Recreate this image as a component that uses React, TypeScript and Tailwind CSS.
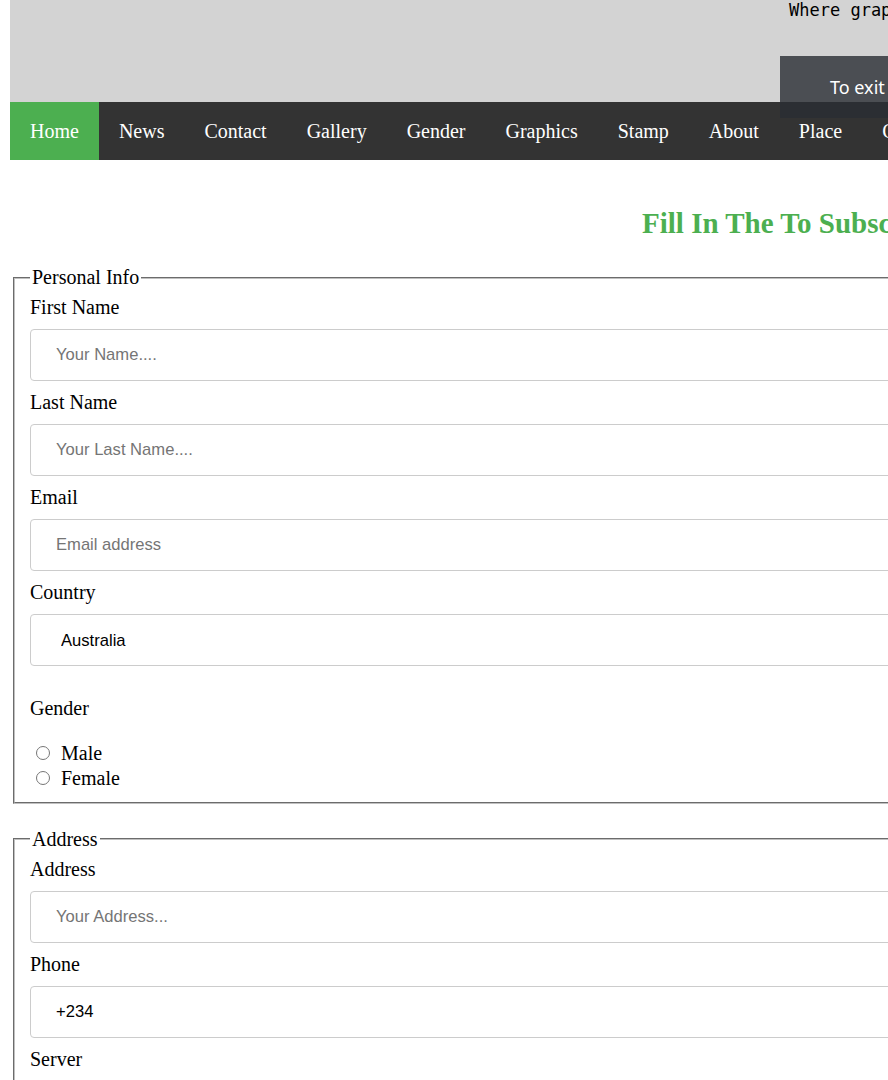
const navItems = ["Home", "News", "Contact", "Gallery", "Gender", "Graphics", "Stamp", "About", "Place", "Company"];

const inputCls =
  "block w-full h-[52px] my-[10px] border border-[#ccc] rounded-[4px] pl-[25px] text-[16.6px] font-['Liberation_Sans',Arial,sans-serif] text-black placeholder:text-[#757575] outline-none";

function Field({ label, placeholder, value }: { label: string; placeholder?: string; value?: string }) {
  return (
    <>
      <label className="block leading-[23px]">{label}</label>
      <input className={inputCls} placeholder={placeholder} defaultValue={value} />
    </>
  );
}

export default function App() {
  return (
    <div className="relative w-[888px] h-[1080px] overflow-hidden bg-white font-['Liberation_Serif','Times_New_Roman',serif] text-black">
      <div className="w-[1500px] pl-[10px]">
        {/* Header */}
        <div className="h-[102px] bg-[#d3d3d3] pl-[779px]">
          <p className="font-['DejaVu_Sans_Mono',monospace] text-[17px] leading-[20px] whitespace-nowrap">
            Where graphics meet creativity
          </p>
        </div>

        {/* Nav */}
        <nav className="flex h-[58px] bg-[#333]">
          {navItems.map((item, i) => (
            <a
              key={item}
              className={`flex items-center px-[20px] text-[20px] text-white whitespace-nowrap ${i === 0 ? "bg-[#4CAF50]" : ""}`}
            >
              {item}
            </a>
          ))}
        </nav>

        {/* Title */}
        <h2 className="mt-[47px] pl-[632px] text-[29px] leading-[33px] font-bold text-[#4CAF50] whitespace-nowrap">
          Fill In The To Subscribe
        </h2>

        <div className="text-[20px] w-[1300px]">
          <fieldset className="mt-[26px] mx-[3px] border-2 [border-style:groove] border-[#c0c0c0] px-[15px] pt-[7px] pb-[11.5px]">
            <legend className="px-[2px] leading-[23px]">Personal Info</legend>
            <Field label="First Name" placeholder="Your Name...." />
            <Field label="Last Name" placeholder="Your Last Name...." />
            <Field label="Email" placeholder="Email address" />
            <label className="block leading-[23px]">Country</label>
            <select className={`${inputCls} pl-[26px]`} defaultValue="Australia">
              <option>Australia</option>
              <option>Canada</option>
              <option>Nigeria</option>
              <option>USA</option>
            </select>
            <label className="block leading-[23px] mt-[31px] mb-[20px]">Gender</label>
            <div className="flex items-center h-[25px]">
              <input type="radio" name="gender" className="w-[14px] h-[14px] ml-[6px] mr-[11px]" />
              <span>Male</span>
            </div>
            <div className="flex items-center h-[25px]">
              <input type="radio" name="gender" className="w-[14px] h-[14px] ml-[6px] mr-[11px]" />
              <span>Female</span>
            </div>
          </fieldset>

          <fieldset className="mt-[24px] mx-[3px] border-2 [border-style:groove] border-[#c0c0c0] px-[15px] pt-[7px] pb-[12.5px]">
            <legend className="px-[2px] leading-[23px]">Address</legend>
            <Field label="Address" placeholder="Your Address..." />
            <Field label="Phone" value="+234" />
            <label className="block leading-[23px]">Server</label>
            <select className={`${inputCls} pl-[26px]`} defaultValue="Select">
              <option>Select</option>
            </select>
          </fieldset>
        </div>
      </div>

      {/* Fullscreen toast */}
      <div className="absolute left-[780px] top-[56px] h-[62px] w-[360px] flex items-center pl-[50px] bg-[#292d33]/80 text-white text-[18px] font-['Noto_Sans',sans-serif] whitespace-nowrap">
        To exit full screen, press Esc
      </div>
    </div>
  );
}
